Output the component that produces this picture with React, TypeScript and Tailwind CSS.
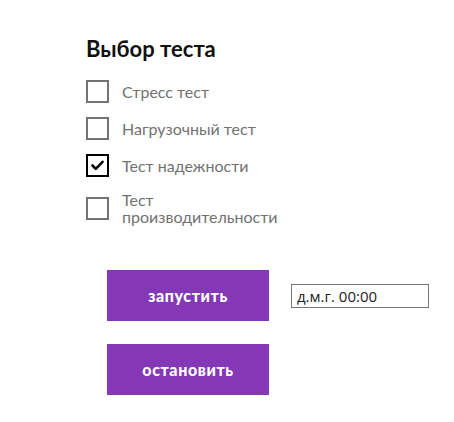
import React from "react";

interface TestOption {
  label: string;
  checked: boolean;
}

const options: TestOption[] = [
  { label: "Стресс тест", checked: false },
  { label: "Нагрузочный тест", checked: false },
  { label: "Тест надежности", checked: true },
  { label: "Тест производительности", checked: false },
];

const Checkbox: React.FC<{ checked: boolean }> = ({ checked }) => (
  <span
    className={
      checked
        ? "flex h-[23px] w-[23px] shrink-0 items-center justify-center border-2 border-black bg-white"
        : "flex h-[23px] w-[23px] shrink-0 items-center justify-center border-2 border-[#747474] bg-white"
    }
  >
    {checked && (
      <svg width="15" height="15" viewBox="0 0 15 15">
        <polyline
          points="2.5,7.5 5.8,10.8 12.5,3.8"
          fill="none"
          stroke="#000"
          strokeWidth="2.6"
          strokeLinecap="round"
          strokeLinejoin="round"
        />
      </svg>
    )}
  </span>
);

const App: React.FC = () => {
  return (
    <div
      className="min-h-[422px] w-[454px] bg-white pl-[86px] pt-[35px]"
      style={{ fontFamily: "Lato, 'Noto Sans', sans-serif" }}
    >
      <h2 className="text-[22px] leading-[28px] font-bold text-[#111]">Выбор теста</h2>

      <div className="mt-[17px] flex flex-col gap-[14px]">
        {options.map((o) => (
          <label key={o.label} className="flex cursor-pointer items-center gap-[13px]">
            <Checkbox checked={o.checked} />
            <span className="w-[160px] text-[16px] leading-[17px] text-[#727272]">{o.label}</span>
          </label>
        ))}
      </div>

      <div className="ml-[21px] mt-[45px] flex flex-col gap-[23px]">
        <div className="flex items-center">
          <button className="h-[51px] w-[162px] bg-[#8438b6] text-[16px] font-black tracking-[0.6px] text-white">
            запустить
          </button>
          <input
            readOnly
            value="д.м.г. 00:00"
            className="ml-[22px] h-[24px] w-[138px] border border-[#777] px-[5px] text-[15px] text-[#222] outline-none"
            style={{ fontFamily: "'Open Sans', sans-serif" }}
          />
        </div>
        <button className="h-[51px] w-[162px] bg-[#8438b6] text-[16px] font-black tracking-[0.6px] text-white">
          остановить
        </button>
      </div>
    </div>
  );
};

export default App;
